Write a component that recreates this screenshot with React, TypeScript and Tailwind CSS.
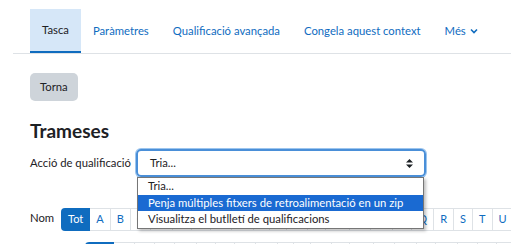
const TABS = ['Tasca', 'Paràmetres', 'Qualificació avançada', 'Congela aquest context']
const LETTERS = 'ABCDEFGHIJKLMNOPQRSTUVWXYZ'.split('')
const OPTIONS = [
  'Tria...',
  'Penja múltiples fitxers de retroalimentació en un zip',
  'Visualitza el butlletí de qualificacions',
]

function LetterBar({ label, labelW }: { label: string; labelW: string }) {
  return (
    <div className="flex items-center">
      <span className={`${labelW} shrink-0 -mt-[3px] text-[11.3px] whitespace-nowrap`}>{label}</span>
      <div className="flex h-[23px]">
        <span className="flex items-center px-[7px] rounded-l-[4px] bg-[#0f6cbf] text-white text-[11px]">Tot</span>
        {LETTERS.map((l) => (
          <span
            key={l}
            className="flex items-center px-[6px] border border-l-0 border-[#dee2e6] text-[#0f6cbf] text-[11px]"
          >
            {l}
          </span>
        ))}
      </div>
    </div>
  )
}

export default function App() {
  return (
    <div className="w-[511px] h-[244px] overflow-hidden bg-white text-[#1d2125] font-['Lato',sans-serif]">
      {/* tabs */}
      <div className="pt-[9px] pl-[13px]">
        <ul className="flex border-b border-[#dee2e6] pl-[17px]">
          {TABS.map((t, i) => (
            <li
              key={t}
              className={`h-[44px] -mb-px px-3 flex items-center text-[11.3px] whitespace-nowrap ${
                i === 0 ? 'bg-[#d6e7f8] border-b-2 border-[#0f6cbf] text-[#1d2125]' : 'text-[#0f6cbf]'
              }`}
            >
              {t}
            </li>
          ))}
          <li className="h-[44px] px-3 flex items-center gap-[4px] text-[11.3px] text-[#0f6cbf]">
            Més
            <svg width="8" height="6" viewBox="0 0 8 6" fill="none">
              <path d="M1 1.5 4 4.5 7 1.5" stroke="#0f6cbf" strokeWidth="1.6" />
            </svg>
          </li>
        </ul>
      </div>

      <div className="pl-[30px]">
        <button className="mt-[19px] h-[28px] px-[10px] rounded-[5px] bg-[#ced4da] text-[11.3px] text-[#1d2125]">
          Torna
        </button>

        <h2 className="mt-[18px] text-[19px] leading-[24px] font-bold">Trameses</h2>

        {/* grading action */}
        <div className="mt-[6px] flex items-center relative">
          <span className="w-[106px] shrink-0 text-[11.3px] whitespace-nowrap">Acció de qualificació</span>
          <div className="w-[290px] h-[28px] flex items-center justify-between pl-[12px] pr-[11px] rounded-[5px] border-2 border-[#4a8fd8] shadow-[0_0_0_1px_#9cc5ee] text-[11.3px]">
            <span>Tria...</span>
            <svg width="7" height="9" viewBox="0 0 7 9">
              <path d="M3.5 0 7 3.6H0Z M3.5 9 7 5.4H0Z" fill="#1d2125" />
            </svg>
          </div>

          {/* open dropdown */}
          <div className="absolute left-[107px] top-[28px] w-[287px] z-10 bg-white border border-[#767676] shadow-[2px_2px_3px_rgba(0,0,0,0.25)] text-[11.3px]">
            {OPTIONS.map((o, i) => (
              <div
                key={o}
                className={`h-[16.5px] leading-[16.5px] pl-[10px] whitespace-nowrap ${
                  i === 1 ? 'bg-[#1a6ad2] text-white' : ''
                }`}
              >
                {o}
              </div>
            ))}
          </div>
        </div>

        <div className="mt-[31px] flex flex-col gap-[11px]">
          <LetterBar label="Nom" labelW="w-[31px]" />
          <LetterBar label="Cognoms" labelW="w-[55px]" />
        </div>
      </div>
    </div>
  )
}
